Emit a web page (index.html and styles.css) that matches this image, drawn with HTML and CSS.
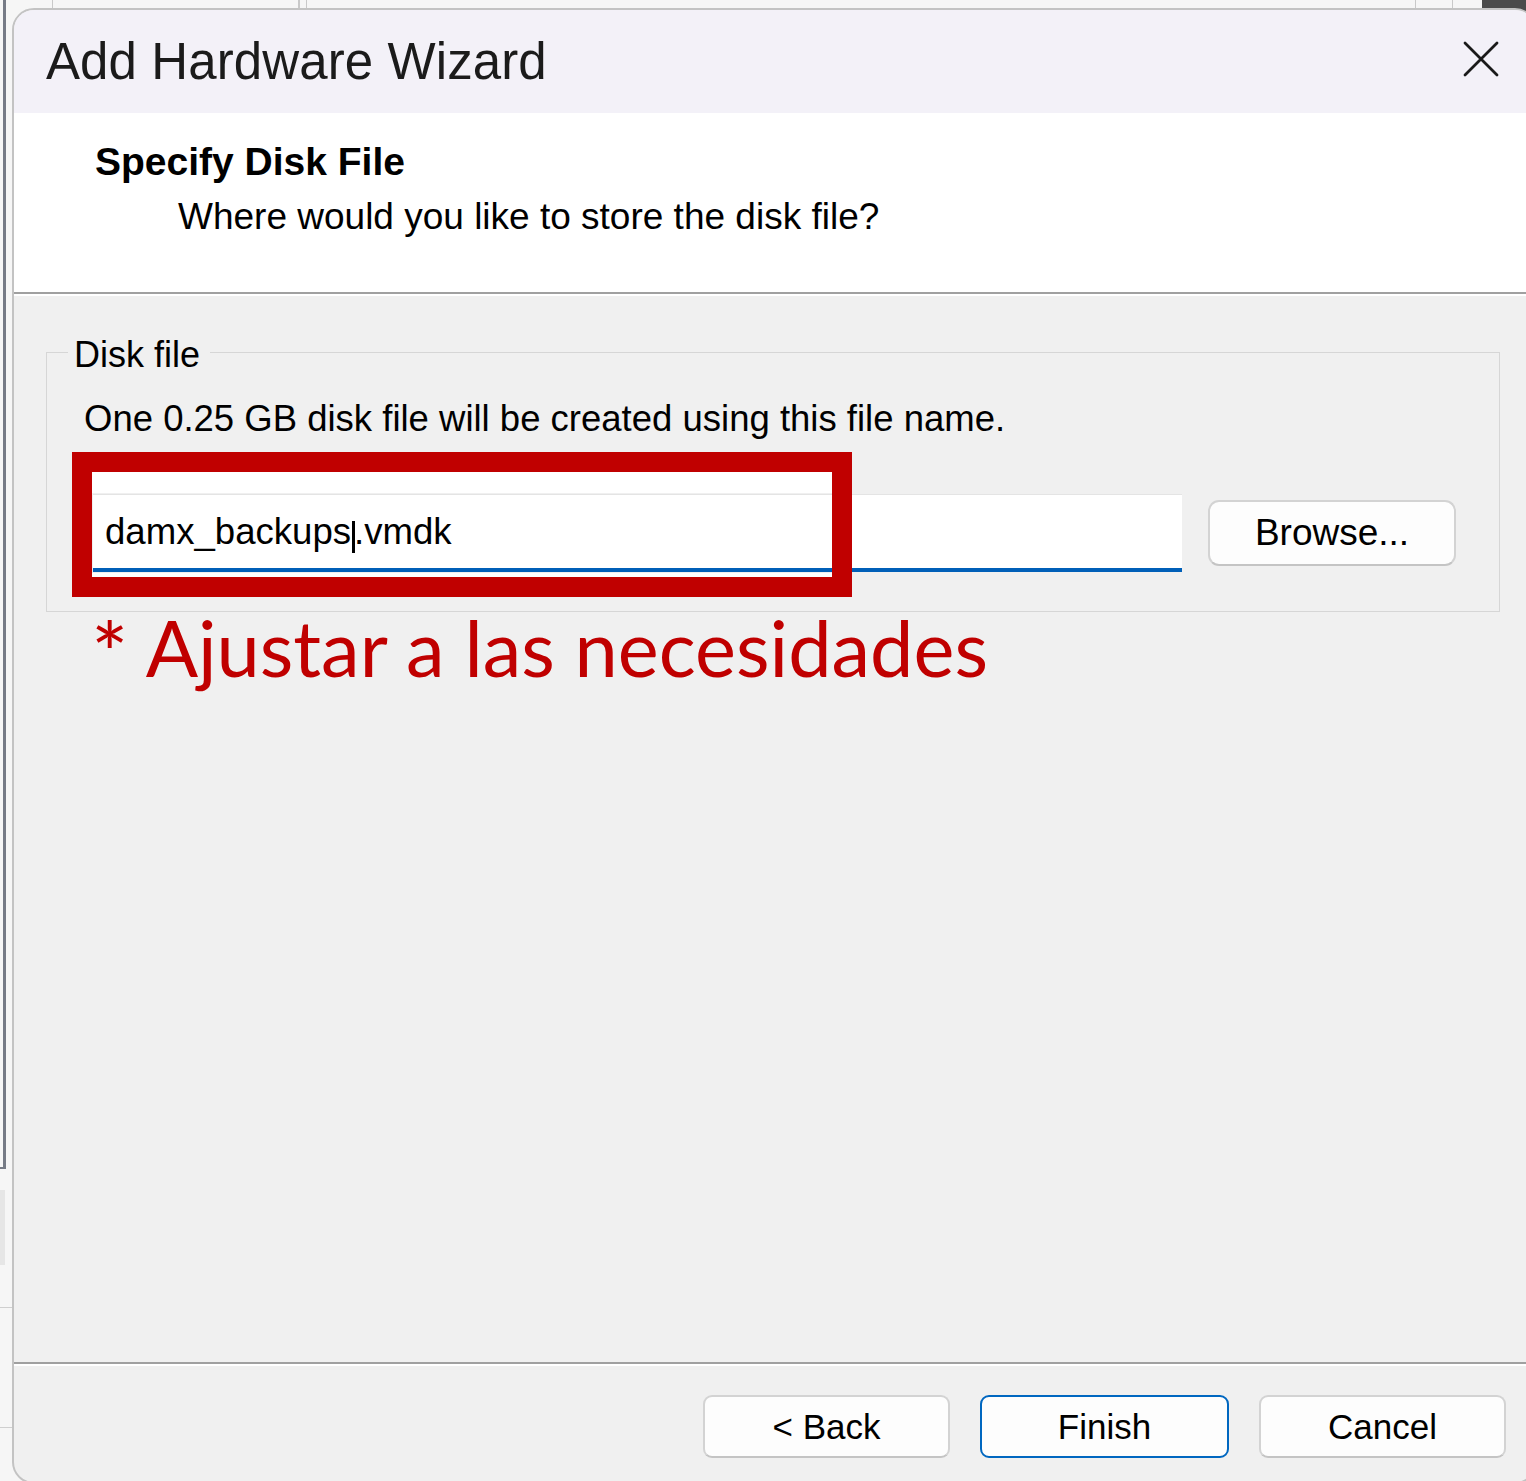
FILE: index.html
```html
<!DOCTYPE html>
<html lang="en">
<head>
<meta charset="utf-8">
<title>Add Hardware Wizard</title>
<link rel="stylesheet" href="styles.css">
</head>
<body>
<div class="screen">
  <div class="dialog">
    <div class="titlebar">
      <span class="title">Add Hardware Wizard</span>
      <svg class="close" viewBox="0 0 36 36" aria-label="Close"><path d="M2 2 L34 34 M34 2 L2 34" fill="none" stroke="#1a1a1a" stroke-width="2.8" stroke-linecap="round"/></svg>
    </div>
    <div class="header">
      <div class="h-title">Specify Disk File</div>
      <div class="h-sub">Where would you like to store the disk file?</div>
    </div>
    <div class="content">
      <fieldset class="group">
        <legend>Disk file</legend>
        <p class="desc">One 0.25 GB disk file will be created using this file name.</p>
        <div class="row">
          <div class="input">damx_backups<span class="caret"></span>.vmdk</div>
          <button class="btn browse">Browse...</button>
          <div class="highlight"></div>
        </div>
      </fieldset>
      <p class="note"><span class="star">*</span> Ajustar a las necesidades</p>
    </div>
    <div class="footer">
      <button class="btn">&lt; Back</button>
      <button class="btn primary">Finish</button>
      <button class="btn">Cancel</button>
    </div>
  </div>
</div>
</body>
</html>
```
FILE: styles.css
```css
html, body {
  margin: 0;
  padding: 0;
  overflow: hidden;
}

.screen {
  width: 1526px;
  height: 1481px;
  box-sizing: border-box;
  padding: 8px 0 0 12px;
  overflow: hidden;
  background-color: #f6f6f6;
  background-image:
    linear-gradient(#767b86, #767b86),
    linear-gradient(#767b86, #767b86),
    linear-gradient(#c9c9c9, #c9c9c9),
    linear-gradient(#c9c9c9, #c9c9c9),
    linear-gradient(#c9c9c9, #c9c9c9),
    linear-gradient(#c9c9c9, #c9c9c9),
    linear-gradient(#c9c9c9, #c9c9c9),
    linear-gradient(#4b4b4b, #4b4b4b),
    linear-gradient(#e6e6e6, #e6e6e6),
    linear-gradient(#cfcfcf, #cfcfcf),
    linear-gradient(#cfcfcf, #cfcfcf);
  background-size:
    3px 1168px,
    6px 2px,
    1px 9px,
    2px 9px,
    1px 9px,
    1px 9px,
    1px 9px,
    44px 12px,
    5px 75px,
    12px 1px,
    12px 1px;
  background-position:
    3px 0,
    0 1167px,
    52px 0,
    298px 0,
    306px 0,
    1415px 0,
    1452px 0,
    1482px 0,
    0 1190px,
    0 1307px,
    0 1427px;
  background-repeat: no-repeat;
  font-family: "Liberation Sans", Arial, sans-serif;
  color: #000;
}

.dialog {
  width: 1525px;
  height: 1476px;
  box-sizing: border-box;
  border: 2px solid #c3c3c3;
  border-radius: 22px;
  overflow: hidden;
  background: #f0f0f0;
  display: flex;
  flex-direction: column;
}

/* Title bar */
.titlebar {
  height: 103px;
  flex: none;
  box-sizing: border-box;
  background: #f3f1f8;
  display: flex;
  align-items: center;
  justify-content: space-between;
  padding: 0 36px 0 32px;
}

.title {
  font-size: 51px;
  color: #1b1b1b;
  letter-spacing: 0.1px;
}

.close {
  width: 36px;
  height: 36px;
  margin-bottom: 6px;
}

/* Header */
.header {
  height: 181px;
  box-sizing: border-box;
  flex: none;
  background: #fff;
  border-bottom: 2px solid #a0a0a0;
  padding: 26px 0 0 81px;
}

.h-title {
  font-size: 39px;
  font-weight: bold;
  line-height: 46px;
}

.h-sub {
  font-size: 37px;
  line-height: 44px;
  margin: 10px 0 0 83px;
}

/* Content */
.content {
  flex: 1;
  border-top: 2px solid #fff;
  border-bottom: 2px solid #a0a0a0;
  background: #f0f0f0;
}

.group {
  margin: 33px 0 0 32px;
  width: 1454px;
  box-sizing: border-box;
  border: 1px solid #d6d6d6;
  padding: 0 43px 39px 21px;
  min-inline-size: 0;
}

.group legend {
  font-size: 36px;
  line-height: 40px;
  padding: 6px 10px 0 6px;
}

.desc {
  margin: 22px 0 0 16px;
  font-size: 36.5px;
  line-height: 44px;
}

.row {
  position: relative;
  margin: 53px 0 0 25px;
  display: flex;
  align-items: center;
  gap: 26px;
}

.input {
  width: 1089px;
  height: 78px;
  box-sizing: border-box;
  background: #fff;
  border-top: 1px solid #e4e4e4;
  border-bottom: 4px solid #005fb8;
  padding-left: 12px;
  display: flex;
  align-items: center;
  font-size: 36.6px;
  white-space: pre;
}

.caret {
  display: inline-block;
  width: 3px;
  height: 32px;
  background: #000;
  margin: 10px -1px 0 1px;
}

.highlight {
  position: absolute;
  left: -21px;
  top: -42px;
  width: 780px;
  height: 145px;
  box-sizing: border-box;
  border: 20px solid #c00000;
  background:
    linear-gradient(#fff, #fff) top / 100% 21px no-repeat,
    linear-gradient(#fff, #fff) bottom / 100% 4px no-repeat;
  pointer-events: none;
}

.btn {
  font-family: "Liberation Sans", Arial, sans-serif;
  font-size: 35px;
  color: #000;
  background: #fdfdfd;
  border: 2px solid #d3d3d3;
  border-bottom-color: #c4c4c4;
  border-radius: 9px;
  width: 247px;
  height: 63px;
  padding: 0;
  flex: none;
}

.browse {
  width: 248px;
  height: 66px;
  font-size: 37px;
  border-radius: 11px;
}

.primary {
  border: 2px solid #0067c0;
  width: 249px;
}

.note {
  margin: 0 0 0 77px;
  font-family: Lato, "Liberation Sans", sans-serif;
  font-size: 77.5px;
  line-height: 72px;
  color: #c00000;
}

.star {
  font-size: 88px;
  line-height: 0;
  vertical-align: -9px;
}

/* Footer */
.footer {
  flex: none;
  height: 118px;
  box-sizing: border-box;
  border-top: 2px solid #fff;
  padding: 29px 29px 0 0;
  display: flex;
  justify-content: flex-end;
  align-items: flex-start;
  gap: 30px;
}
```
